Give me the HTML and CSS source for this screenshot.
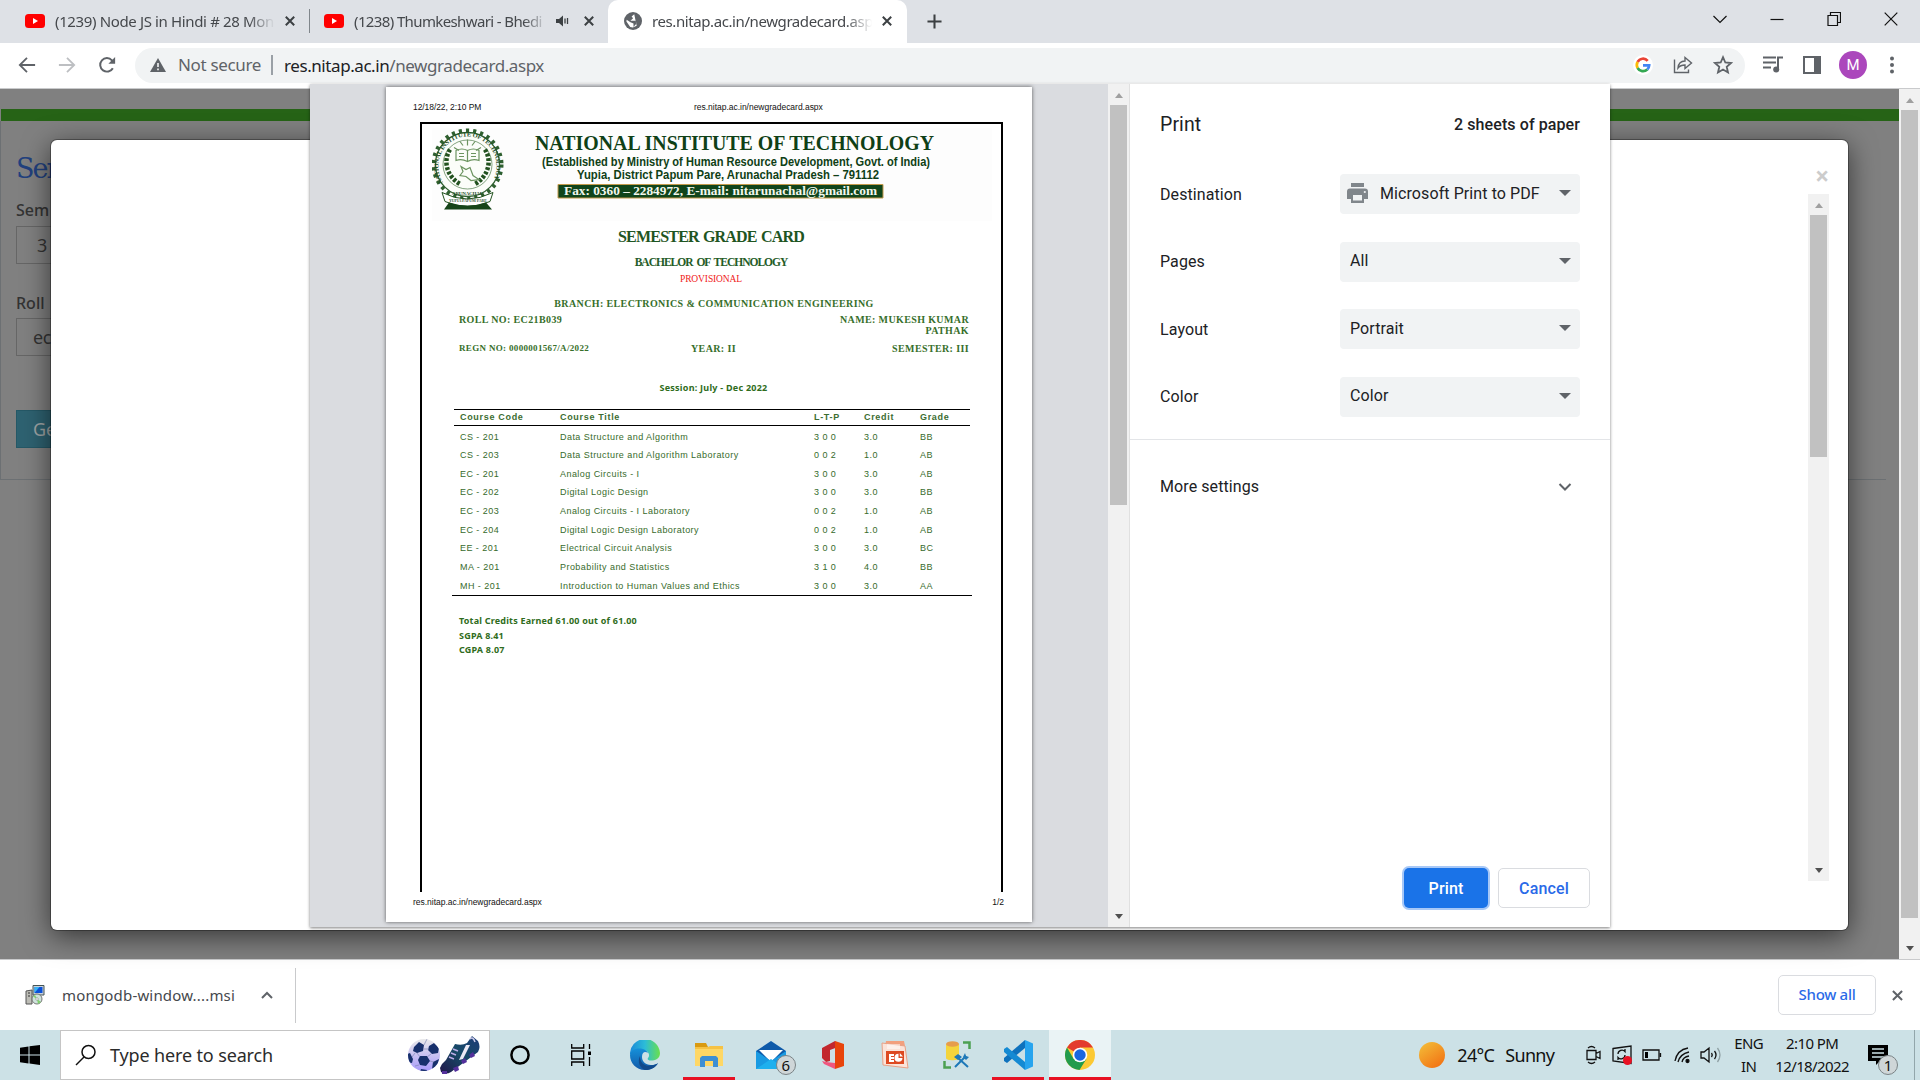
FILE: index.html
```html
<!DOCTYPE html>
<html lang="en">
<head>
<meta charset="utf-8">
<title>res.nitap.ac.in/newgradecard.aspx</title>
<link rel="stylesheet" href="styles.css">
</head>
<body>
<header class="tabstrip">
  <div class="tab tab-first">
    <svg class="yt" viewBox="0 0 20 14"><rect width="20" height="14" rx="3.5" fill="#f00"/><path d="M8 4l5 3-5 3z" fill="#fff"/></svg>
    <span class="tab-title">(1239) Node JS in Hindi # 28 Mon</span>
    <svg class="x" viewBox="0 0 10 10"><path d="M.8.8l8.400 8.400M9.200.8L.8 9.200"/></svg>
  </div>
  <div class="tab tab-second">
    <svg class="yt" viewBox="0 0 20 14"><rect width="20" height="14" rx="3.500" fill="#f00"/><path d="M8 4l5 3-5 3z" fill="#fff"/></svg>
    <span class="tab-title short">(1238) Thumkeshwari - Bhedi</span>
    <svg class="speaker" viewBox="0 0 14 12"><path d="M0 4h3l4-3.500v11L3 8H0z" fill="#3c4043"/><path d="M9 3.500v5M11.500 3v6" stroke="#3c4043" stroke-width="1.300"/></svg>
    <svg class="x" viewBox="0 0 10 10"><path d="M.8.8l8.400 8.400M9.200.8L.8 9.200"/></svg>
  </div>
  <div class="tab tab-active">
    <svg class="globe" viewBox="0 0 20 20"><circle cx="10" cy="10" r="9" fill="#5f6368"/><path d="M11.500 1.500L8 4.500l2 2-3.500 3.500h6.500l1.500 3.500-4 4.500v-4.500L6.500 12 1.500 8.500l-.3 2.500 5 7 3.500.8 5-2.300z" fill="#fff" transform="translate(2.500 2.200) scale(.76)"/></svg>
    <span class="tab-title">res.nitap.ac.in/newgradecard.aspx</span>
    <svg class="x" viewBox="0 0 10 10"><path d="M.8.8l8.400 8.400M9.200.8L.8 9.200"/></svg>
  </div>
  <svg class="newtab" viewBox="0 0 16 16"><path d="M8 .5v15M.5 8h15" stroke="#3c4043" stroke-width="2.200"/></svg>
  <div class="winctl">
    <svg viewBox="0 0 14 14"><path d="M.5 4l6.500 6.500L13.500 4"/></svg>
    <svg viewBox="0 0 14 14"><path d="M.5 7.500h13"/></svg>
    <svg viewBox="0 0 14 14"><path d="M1 3.500h9.500v10H1zM3.500 3.500v-3h10v10h-3"/></svg>
    <svg viewBox="0 0 14 14"><path d="M.7.700l12.600 12.600M13.300.7L.7 13.300"/></svg>
  </div>
</header>

<nav class="toolbar">
  <svg class="nav" viewBox="0 0 20 20"><path d="M19 10H3M10 2L2 10l8 8" fill="none" stroke="#5f6368" stroke-width="2"/></svg>
  <svg class="nav" viewBox="0 0 20 20"><path d="M1 10h16M10 2l8 8-8 8" fill="none" stroke="#bdbfc2" stroke-width="2"/></svg>
  <svg class="nav" viewBox="0 0 20 20"><path d="M16.500 13.500A7.500 7.500 0 1 1 15.500 4.800L17 6.500" fill="none" stroke="#5f6368" stroke-width="2.200"/><path d="M19 1v7.500h-7.500z" fill="#5f6368"/></svg>
  <div class="omnibox">
    <svg class="warn" viewBox="0 0 16 14"><path d="M8 0l8 14H0z" fill="#5f6368"/><path d="M8 5v4M8 10.500v1.700" stroke="#fff" stroke-width="1.500"/></svg>
    <span class="insecure">Not secure</span>
    <span class="url"><b>res.nitap.ac.in</b>/newgradecard.aspx</span>
    <span class="omni-icons">
      <svg width="20" height="20" viewBox="0 0 20 20"><circle cx="10" cy="10" r="10" fill="#fff"/><g fill="none" stroke-width="2.700"><path d="M14.700 5.800A6.200 6.200 0 0 0 4.600 7" stroke="#ea4335"/><path d="M4.600 7a6.200 6.200 0 0 0 0 6" stroke="#fbbc05"/><path d="M4.600 13a6.200 6.200 0 0 0 9.700 1.500" stroke="#34a853"/><path d="M14.300 14.500a6 6 0 0 0 1.900-4.200H10" stroke="#4285f4"/></g></svg>
      <svg width="20" height="20" viewBox="0 0 20 20" fill="none" stroke="#5f6368" stroke-width="1.400"><path d="M1.500 4.500v13h14v-3"/><path d="M5 13c.5-5 3-7 7-7V2.500L18.500 8 12 13.500V10c-3 0-5 .5-7 3z"/></svg>
      <svg width="20" height="20" viewBox="0 0 20 20"><path d="M10 2.200l2.300 5.300 5.700.5-4.300 3.800 1.300 5.700-5-3-5 3 1.300-5.700L2 8l5.700-.5z" fill="none" stroke="#5f6368" stroke-width="1.800"/></svg>
    </span>
  </div>
  <svg class="queue" viewBox="0 0 20 18"><path d="M0 1.500h13M0 6.500h13M0 11.500h8M15 14V1.500h5" fill="none" stroke="#5f6368" stroke-width="2"/><circle cx="13.200" cy="13.500" r="3" fill="#5f6368"/></svg>
  <svg class="side" viewBox="0 0 18 18"><path d="M1 1h16v16H1z" fill="#fff" stroke="#5f6368" stroke-width="2"/><path d="M11 1h6v16h-6z" fill="#5f6368"/></svg>
  <span class="avatar">M</span>
  <svg class="dots" viewBox="0 0 4 18" fill="#5f6368"><circle cx="2" cy="2.500" r="2"/><circle cx="2" cy="9" r="2"/><circle cx="2" cy="15.500" r="2"/></svg>
</nav>

<main class="page">
  <section class="site">
    <div class="green"></div>
    <div class="form">
      <h1>Sem</h1>
      <label>Sem</label>
      <div class="field sel">3</div>
      <label class="second">Roll</label>
      <div class="field">ec</div>
      <div class="go">Get</div>
    </div>
  </section>
  <div class="vscroll outer"><i class="up"></i><i class="thumb"></i><i class="down"></i></div>

  <section class="modal">
    <div class="modal-x">×</div>
    <div class="vscroll inner"><i class="up"></i><i class="thumb"></i><i class="down"></i></div>
  </section>

  <section class="print">
    <div class="preview">
      <article class="sheet">
        <div class="runhead"><span>12/18/22, 2:10 PM</span><span>res.nitap.ac.in/newgradecard.aspx</span></div>
        <div class="frame">
          <svg class="letterhead" width="560" height="93" viewBox="0 2.500 560 93">
            <defs><path id="ring" d="M11 57A29 30 0 1 1 60 57"/></defs>
            <circle cx="35.500" cy="39" r="34" fill="none" stroke="#2f6030" stroke-width="4" stroke-dasharray="3.200 4"/>
            <circle cx="35.500" cy="39" r="32" fill="#fbfdf9" stroke="#2f6030" stroke-width="1.300"/>
            <circle cx="35.500" cy="39" r="24.500" fill="none" stroke="#4f7c4a" stroke-width=".7"/>
            <g fill="#1c4c1f" font-family="Liberation Serif, serif" font-weight="bold" font-size="6.500"><text><textPath href="#ring" textLength="122">NATIONAL INSTITUTE OF TECHNOLOGY</textPath></text></g>
            <g fill="none" stroke="#22521f" stroke-width="4.500" stroke-dasharray="3 1.600"><path d="M18 24c-7 11-4 27 11 35M53 24c7 11 4 27-11 35"/></g>
            <path d="M24 35V25q6-3 11.500 0 6-3 11.500 0v10q-6-2-11.500 1-6-3-11.500-1zM35.500 25v11M27 28h5M27 31h5M39 28h5M39 31h5M22 22l5 3M49 22l-5 3M35.500 14v6M28 16l3 4M43 16l-3 4M29 41l5 3 4-2 3 8 6 4-8 1-5-4-6-1 3-4z" fill="none" stroke="#6c9460" stroke-width="1.200"/>
            <path d="M10 67q25 13 51 0l-3 9q-23 10-45 0z" fill="#fff" stroke="#22521f"/>
            <text x="20" y="69" textLength="31" font-size="5" font-weight="bold" font-family="Liberation Serif, serif" fill="#1c4c1f">ARUNACHAL</text>
            <text x="17" y="76" textLength="38" font-size="4" font-weight="bold" font-family="Liberation Serif, serif" fill="#39623a">YUPIA PAPUM PARE</text>
            <path d="M17 77q19 6 37 0l6 7H12z" fill="#164519"/>
            <g fill="#0f4016" font-weight="bold">
              <text x="103" y="24.500" font-family="Liberation Serif, serif" font-size="21" textLength="399" lengthAdjust="spacingAndGlyphs">NATIONAL INSTITUTE OF TECHNOLOGY</text>
              <g font-family="Liberation Sans, sans-serif" font-size="12">
                <text x="110" y="40" textLength="388" lengthAdjust="spacingAndGlyphs">(Established by Ministry of Human Resource Development, Govt. of India)</text>
                <text x="145" y="53" textLength="302" lengthAdjust="spacingAndGlyphs">Yupia, District Papum Pare, Arunachal Pradesh – 791112</text>
              </g>
            </g>
            <path d="M126 59h325v13.500H126z" fill="#10451b" stroke="#c39a4c"/>
            <text x="132" y="69.500" font-family="Liberation Serif, serif" font-weight="bold" font-size="11.500" textLength="313" lengthAdjust="spacingAndGlyphs" fill="#f3f8ee">Fax: 0360 – 2284972, E-mail: nitarunachal@gmail.com</text>
          </svg>
          <h2>SEMESTER GRADE CARD</h2>
          <h3>BACHELOR OF TECHNOLOGY</h3>
          <div class="prov">PROVISIONAL</div>
          <div class="info branch">BRANCH: ELECTRONICS &amp; COMMUNICATION ENGINEERING</div>
          <div class="info row2"><span>ROLL NO: EC21B039</span><span class="r">NAME: MUKESH KUMAR<br>PATHAK</span></div>
          <div class="info row3"><span class="regn">REGN NO: 0000001567/A/2022</span><span>YEAR: II</span><span class="r">SEMESTER: III</span></div>
          <div class="session">Session: July - Dec 2022</div>
          <div class="grades head"><span>Course Code</span><span>Course Title</span><span>L-T-P</span><span>Credit</span><span>Grade</span></div>
          <div class="body">
            <div class="grades"><span>CS - 201</span><span>Data Structure and Algorithm</span><span>3 0 0</span><span>3.0</span><span>BB</span></div>
            <div class="grades"><span>CS - 203</span><span>Data Structure and Algorithm Laboratory</span><span>0 0 2</span><span>1.0</span><span>AB</span></div>
            <div class="grades"><span>EC - 201</span><span>Analog Circuits - I</span><span>3 0 0</span><span>3.0</span><span>AB</span></div>
            <div class="grades"><span>EC - 202</span><span>Digital Logic Design</span><span>3 0 0</span><span>3.0</span><span>BB</span></div>
            <div class="grades"><span>EC - 203</span><span>Analog Circuits - I Laboratory</span><span>0 0 2</span><span>1.0</span><span>AB</span></div>
            <div class="grades"><span>EC - 204</span><span>Digital Logic Design Laboratory</span><span>0 0 2</span><span>1.0</span><span>AB</span></div>
            <div class="grades"><span>EE - 201</span><span>Electrical Circuit Analysis</span><span>3 0 0</span><span>3.0</span><span>BC</span></div>
            <div class="grades"><span>MA - 201</span><span>Probability and Statistics</span><span>3 1 0</span><span>4.0</span><span>BB</span></div>
            <div class="grades"><span>MH - 201</span><span>Introduction to Human Values and Ethics</span><span>3 0 0</span><span>3.0</span><span>AA</span></div>
          </div>
          <div class="totals">Total Credits Earned 61.00 out of 61.00<br>SGPA 8.41<br>CGPA 8.07</div>
        </div>
        <div class="runfoot"><span>res.nitap.ac.in/newgradecard.aspx</span><span>1/2</span></div>
      </article>
      <div class="vscroll mid"><i class="up"></i><i class="thumb"></i><i class="down"></i></div>
    </div>
    <aside class="settings">
      <div class="title"><span>Print</span><strong>2 sheets of paper</strong></div>
      <div class="opts">
        <div class="opt"><span>Destination</span><div class="pick dest"><svg width="22" height="20" viewBox="0 0 22 20"><path d="M4 0h13v4H4z" fill="#80868b"/><path d="M3 5.500h15a3 3 0 0 1 3 3V16h-4v4H4v-4H0V8.500a3 3 0 0 1 3-3z" fill="#80868b"/><path d="M6 12h9v5.500H6z" fill="#f1f3f4"/><circle cx="17.800" cy="9" r="1.100" fill="#f1f3f4"/></svg>Microsoft Print to PDF</div></div>
        <div class="opt"><span>Pages</span><div class="pick">All</div></div>
        <div class="opt"><span>Layout</span><div class="pick">Portrait</div></div>
        <div class="opt"><span>Color</span><div class="pick">Color</div></div>
      </div>
      <div class="more"><span>More settings</span><svg width="14" height="10" viewBox="0 0 14 10"><path d="M1.500 2L7 7.500 12.500 2" fill="none" stroke="#5f6368" stroke-width="2"/></svg></div>
      <div class="actions"><button class="primary">Print</button><button>Cancel</button></div>
    </aside>
  </section>
</main>

<section class="downloads">
  <svg class="msi" viewBox="0 0 20 20"><path d="M1 6l6-1v14H1z" fill="#bdbdb6" stroke="#555"/><path d="M3 8h2M3 11h2" stroke="#333"/><path d="M8 .5h11V10H8z" fill="#c8d0dc" stroke="#455"/><path d="M9.500 2h8v6h-8z" fill="#0a50d8"/><path d="M9.500 8l5-6h-5z" fill="#38b4f4"/><circle cx="12" cy="14" r="5" fill="#cfe3dc" stroke="#777"/><path d="M12 14l-4-2.500L10 10zM12 14l4 3-3 2z" fill="#7fcf6c"/><circle cx="12" cy="14" r="1.300" fill="#fff" stroke="#777" stroke-width=".5"/></svg>
  <span class="file">mongodb-window....msi</span>
  <svg class="chev" viewBox="0 0 12 8"><path d="M1 7l5-5 5 5" fill="none" stroke="#5f6368" stroke-width="2"/></svg>
  <i class="bar"></i>
  <button class="showall">Show all</button>
  <svg class="dx" viewBox="0 0 12 12"><path d="M1 1l10 10M11 1L1 11" stroke="#5f6368" stroke-width="2.200"/></svg>
</section>

<footer class="taskbar">
  <div class="start"><svg width="20" height="20" viewBox="0 0 20 20"><path d="M0 2.700l8.500-1.200V9.400H0zM9.500 1.300L20 0v9.400H9.500zM0 10.400h8.500v8L0 17.300zM9.500 10.400H20V20L9.500 18.600z"/></svg></div>
  <div class="search">
    <svg width="22" height="22" viewBox="0 0 22 22"><circle cx="13.500" cy="8" r="6.500" fill="none" stroke="#111" stroke-width="1.500"/><path d="M9 13l-8 8" stroke="#111" stroke-width="1.500"/></svg>
    <span>Type here to search</span>
    <svg class="sport" width="74" height="40" viewBox="0 0 74 40"><defs><linearGradient id="ball" x2="0" y2="1"><stop offset="0" stop-color="#e9e9ea"/><stop offset="1" stop-color="#a89afa"/></linearGradient><linearGradient id="boot" x1="1" x2="0" y2="1"><stop offset="0" stop-color="#1d3c78"/><stop offset=".5" stop-color="#174a66"/><stop offset="1" stop-color="#21164a"/></linearGradient><clipPath id="bc"><circle cx="17" cy="20" r="16"/></clipPath></defs><circle cx="17" cy="20" r="16" fill="url(#ball)"/><g clip-path="url(#bc)" fill="#17306c"><path d="M7 12l5-5 5 3-1 6-6 2-4-2zM0 19l3-1 3 6-1 4-5-1zM22 11l5-3 5 5-1 5-6 1-4-4zM13 21l7 0 3 5-4 5-6-1-2-5zM26 27l6-3-2 8-5 2zM14 34l6 1-1 3-6-1z"/><path d="M16 14l6 0M8 18l-3 4M23 26l4 1M24 19l-4 3M10 18l3 4M12 30l-4 1M17 10l3-6" stroke="#8088b4" fill="none" stroke-width=".7"/></g><path d="M33 33q2-5 6-8l9-16q7 2 12-1l5-7 6 5q3 6 0 11L44 37q-5 3-10 0z" fill="url(#boot)"/><path d="M52 25l7-15 4 0-7 14z" fill="#eceaf6"/><path d="M44 18l5 2M46 14l5 2M42 22l5 2" stroke="#bcaee8" stroke-width="1.500"/><path d="M35 36h5v3h-5zM46 33l5-2 1 4-4 2zM54 26l4-3 2 4-4 2zM62 20l4-3 2 4-4 2z" fill="#54309c"/><path d="M63 4q3-3 5 3" stroke="#c9c8e8" stroke-width="1.500" fill="none"/></svg>
  </div>
  <div class="apps">
    <div><svg width="22" height="22" viewBox="0 0 22 22"><circle cx="11" cy="11" r="8.600" fill="none" stroke="#000" stroke-width="2.500"/></svg></div>
    <div><svg width="20" height="22" viewBox="0 0 20 22" fill="none" stroke="#000" stroke-width="1.300"><path d="M.7 0v4h12V0M.7 7h12v8H.7zM.7 22v-4h12v4M18.500 0v5M18.500 13v9"/><path d="M17 7.500h3v3.500h-3z" fill="#000" stroke="none"/></svg></div>
    <div><svg width="30" height="30" viewBox="0 0 30 30"><defs><linearGradient id="e1" x2="1"><stop offset="0" stop-color="#1b8ad8"/><stop offset=".5" stop-color="#2cbcd8"/><stop offset="1" stop-color="#6ae04c"/></linearGradient><linearGradient id="e2" x2="0" y2="1"><stop offset="0" stop-color="#1590d9"/><stop offset="1" stop-color="#1259a8"/></linearGradient></defs><path d="M0 15A15 15 0 0 1 30 13c0 6-5 7.500-9 7.500-3 0-4-1.200-3-2.500 3-4-1-8-5-8-6 0-12 3-13 5z" fill="url(#e1)"/><path d="M0 15c1-5 5-7 11-6.500 4 .5 6 2.500 7 4.500-3-2-6-1-6 4 0 4 3 8 9 8 3 0 5-.8 7-1.800C25 28 20 30 15 30 6 30 0 23 0 15z" fill="url(#e2)"/><path d="M10 16c0 7 5 11 11 9.500 3-.3 5-1 7-2.300-3 4.500-7 6.800-13 6.800-5-2-8-8-5-14z" fill="#114a8b"/></svg></div>
    <div class="on"><svg width="28" height="24" viewBox="0 0 28 24"><path d="M0 0h11l2 4H0z" fill="#d99a12"/><path d="M0 4h28v19H0z" fill="#fed765"/><path d="M0 4h13l2-1h13v3H0z" fill="#f6c244"/><path d="M5 24v-9l2-2h14l2 2v9h-5v-6h-8v6z" fill="#3d8fd4"/></svg></div>
    <div class="mail"><svg width="30" height="28" viewBox="0 0 30 28"><path d="M0 10L15 0l15 10v18H0z" fill="#0e5aa9"/><path d="M3 9h24L15 21z" fill="#fff"/><path d="M0 10l15 10L30 10v18H0z" fill="#199ae2"/><path d="M0 28l15-10 15 10z" fill="#1fb0ee"/></svg><em>6</em></div>
    <div><svg width="24" height="28" viewBox="0 0 24 28"><path d="M1 7L14 0l3 6-8 3v11l-4 1-4-4z" fill="#c2272d"/><path d="M14 0l9 3v22l-9 3z" fill="#e8440b"/><path d="M1 20l4 1 9 1v6L3 23z" fill="#f0567e"/></svg></div>
    <div><svg width="28" height="28" viewBox="0 0 28 28"><path d="M5 0h18l1 5H4z" fill="#f2a07e"/><path d="M1 2l23 3 3 22-25-3z" fill="#fbe3d9" stroke="#e9a186"/><path d="M5 10h18v13H5z" fill="#dd4a22"/><path d="M8 13h5v2h-3v1h3v2h-3v1h3v2H8z" fill="#fff"/><path d="M17.500 12.800a4 4 0 1 0 4 4.200h-4z" fill="#fff"/><path d="M18.800 12v3.500H22z" fill="#fff"/><path d="M6 3h13v5H6z" fill="#fff" opacity=".5"/></svg></div>
    <div><svg width="28" height="28" viewBox="0 0 28 28"><path d="M3 3v14c0 3 13 3 13 0V3z" fill="#f4d43c"/><ellipse cx="9.500" cy="3" rx="6.500" ry="2.800" fill="#e69c4c"/><path d="M20 1.500h6.500V8M1.500 20v6.500H8" fill="none" stroke="#4ba052" stroke-width="2.500"/><path d="M14 16l11 10M23 15L12 26" stroke="#1d78b8" stroke-width="2"/><path d="M20 16l2-4 1 3 3 1-3 3zM11 16l4-3 4 3-4 3z" fill="#1d78b8"/></svg></div>
    <div class="on"><svg width="30" height="30" viewBox="0 0 30 30"><path d="M22 0v8L4 23l-3-2v-3z" fill="#0e72bd"/><path d="M22 30v-8L4 7 1 9v3z" fill="#148ad3"/><path d="M22 0l8 3.500v23L22 30z" fill="#27a4ee"/></svg></div>
    <div class="on active"><svg width="30" height="30" viewBox="0 0 30 30"><circle cx="15" cy="15" r="15" fill="#fcc934"/><path d="M15 15L2 7.500A15 15 0 0 1 28 7.500H15z" fill="#e33b2e"/><path d="M2 7.500A15 15 0 0 0 14.500 30L21.500 18.700 15 15 8.500 18.700z" fill="#229b4d"/><circle cx="15" cy="15" r="7.300" fill="#fff"/><circle cx="15" cy="15" r="5.700" fill="#1a66e0"/></svg></div>
  </div>
  <div class="tray">
    <i class="sun"></i><span class="temp">24°C</span><span>Sunny</span>
    <svg viewBox="0 0 16 20"><path d="M1 5.500h9v9H1zM10 8.500l4-2v7l-4-2M2 3q3.500-3 7 0M2 17q3.500 3 7 0"/></svg>
    <svg viewBox="0 0 20 20"><path d="M1 3.500L19 1v17.500L1 16z"/><path d="M6 9a4 4 0 0 1 7-2.500V4M13 10a4 4 0 0 1-7 2.500V15"/><circle cx="15.500" cy="15.500" r="4.500" fill="#e81123" stroke="none"/></svg>
    <svg viewBox="0 0 20 20"><path d="M1 5h16v10H1zM18.500 8v4"/><path d="M3 7h3v6H3z" fill="#000" stroke="none"/></svg>
    <svg viewBox="0 0 16 20"><path d="M1 16Q3 5 14 3M4 17q2-8 11-10M8 17q1-5 7-6"/><circle cx="13.500" cy="16" r="1.500" fill="#000"/></svg>
    <svg viewBox="0 0 21 20"><path d="M1 7h3l5-4v14l-5-4H1zM11.500 8q1.500 2 0 4M14.500 6q3 4 0 8"/><path d="M17.500 3q5 7 0 14" stroke="#8fa0a4"/></svg>
    <div class="two">ENG<br>IN</div>
    <div class="two">2:10 PM<br>12/18/2022</div>
    <div class="notif"><svg viewBox="0 0 20 20"><path d="M0 0h20v16h-8l-4 4v-4H0z" fill="#000" stroke="none"/><path d="M4 4h12M4 8h12M4 12h12" stroke="#cce1e6"/></svg><em>1</em></div>
  </div>
</footer>
</body>
</html>
```
FILE: styles.css
```css
*{box-sizing:border-box}
body{margin:0;width:1920px;height:1080px;overflow:hidden;display:flex;flex-direction:column;font-family:"Noto Sans",sans-serif;color:#202124;background:#fff}
svg{display:block;flex:none}
i,em{font-style:normal}

.tabstrip{height:43px;background:#dee1e6;display:flex;align-items:center;flex:none}
.tab{display:flex;align-items:center;height:43px;padding-bottom:1px;flex:none}
.tab-first{width:311px;padding-left:25px}
.tab-first::after{content:"";width:1px;height:24px;background:#80868b;margin-left:14px}
.tab-second{width:297px;padding-left:13px}
.tab-active{width:299px;background:#fff;border-radius:10px 10px 0 0;padding-left:15px}
.yt{width:20px;height:14px;margin-right:10px}
.globe{width:20px;height:20px;margin-right:9px}
.tab-title{width:220px;margin-right:10px;overflow:hidden;white-space:nowrap;font-size:15px;letter-spacing:-.36px;color:#45484c;-webkit-mask-image:linear-gradient(90deg,#000 88%,transparent);mask-image:linear-gradient(90deg,#000 88%,transparent)}
.tab-second .tab-title{width:193px;margin-right:9px;letter-spacing:-.62px}
.tab-active .tab-title{letter-spacing:-.41px}
.x{width:10px;height:10px;overflow:visible}
.x path{stroke:#3c4043;stroke-width:2;fill:none}
.speaker{width:14px;height:12px;margin-right:14px}
.newtab{width:15px;height:15px;margin-left:20px}
.winctl{display:flex;gap:43px;margin-left:auto;padding:0 22px 5px 0}
.winctl svg{width:14px;height:14px}
.winctl path{fill:none;stroke:#111;stroke-width:1.200}

.toolbar{height:46px;background:#fff;border-bottom:1px solid #c9cacc;display:flex;align-items:center;padding:0 21px 1px 18px;flex:none}
.nav{width:18px;height:18px;margin-right:22px}
.omnibox{width:1610px;height:35px;border-radius:18px;background:#f1f3f4;display:flex;align-items:center;padding-left:15px;margin-left:-3px;font-size:17px;color:#5f6368}
.warn{width:16px;height:14px;margin-right:12px}
.insecure{letter-spacing:-.34px;padding-right:10px;border-right:2px solid #9aa0a6;line-height:20px}
.url{letter-spacing:-.43px;padding-left:11px}
.url b{font-weight:400;color:#202124}
.omni-icons{display:flex;gap:20px;margin-left:auto;padding-right:12px}
.queue{width:20px;height:18px;margin-left:18px}
.side{width:18px;height:18px;margin-left:20px}
.avatar{width:28px;height:28px;border-radius:50%;background:#ab47bc;color:#fff;font:15px/28px Roboto,sans-serif;text-align:center;margin:0 23px 0 18px}
.dots{width:4px;height:18px}

.page{height:870px;position:relative;background:#808080;display:flex;flex:none}
.site{flex:1;padding:20px 0 0 1px}
.green{height:12px;background:#266316}
.form{height:359px;border:solid #6c7073;border-width:0 0 1px 1px;margin-left:-1px;padding:29px 0 0 15px;color:#333;font-size:17px;width:1886px}
h1{font:27px/38px "DejaVu Serif",serif;color:#22417e;margin:0 0 12px;height:38px;letter-spacing:-2px}
.form label{display:block;font-size:16px;font-weight:500;line-height:20px;height:26px}
.form .second{margin-top:29px;height:25px}
.field{width:400px;height:38px;border:1px solid #666;padding:5px 16px;font-size:18px;line-height:26px;letter-spacing:-.5px}
.field.sel{padding-left:20px}
.go{width:90px;height:38px;margin-top:54px;background:#2e6271;border:1px solid #255866;color:#9fa5a6;padding:5px 16px;font-size:18px;line-height:27px}

.vscroll{width:21px;background:#f1f1f1;display:flex;flex-direction:column;align-items:center;flex:none}
.vscroll .up,.vscroll .down{width:0;height:0;border:4.500px solid transparent}
.vscroll .up{border-bottom:5px solid #a0a0a0;border-top:0;margin:9px 0 7px}
.vscroll .down{border-top:5px solid #505050;border-bottom:0;margin:auto 0 8px}
.vscroll .thumb{width:17px;background:#c1c1c1}
.outer .thumb{height:808px}
.inner .thumb{height:242px}
.mid .thumb{height:400px}

.modal{position:absolute;left:51px;top:51px;width:1797px;height:790px;background:#fff;border-radius:6px;box-shadow:0 0 0 1px rgba(0,0,0,.3),0 6px 28px rgba(0,0,0,.6);display:flex;flex-direction:column;align-items:flex-end;padding:20px 19px 0 0}
.modal-x{font:bold 25px/30px "Noto Sans",sans-serif;color:#ccc;height:34px;width:14px}
.inner{height:687px}

.print{position:absolute;left:310px;top:-5px;width:1300px;height:843px;background:#fff;display:flex;box-shadow:0 1px 3px rgba(0,0,0,.5)}
.preview{width:820px;background:#dadce0;display:flex;padding-left:76px;border-right:1px solid #e0e0e0;justify-content:space-between}
.sheet{width:646px;height:835px;margin-top:3px;background:#fff;box-shadow:0 0 4px rgba(0,0,0,.6);padding:15px 28px 0 27px}
.runhead,.runfoot{font:8.500px/11px "Liberation Sans",sans-serif;color:#111;display:flex;letter-spacing:-.02px}
.runhead{height:20px}
.runhead span:first-child{width:281px;letter-spacing:-.07px}
.runfoot{justify-content:space-between;padding-top:5px}
.frame{width:583px;height:770px;margin-left:7px;border:2px solid #000;border-bottom:0;padding:4px 9px 0 10px;color:#24602a;text-align:center}
.letterhead{background:#fdfdfd}
h2{font:bold 16px/20px "Liberation Serif",serif;margin:6px 0 0 -2px;letter-spacing:-.8px;word-spacing:1px;color:#1f5522}
h3{font:bold 11.500px/14px "Liberation Serif",serif;margin:8px 0 0 -2px;letter-spacing:-1px;word-spacing:2px;color:#245c28}
.prov{font:9.500px/12px "Liberation Serif",serif;color:#f02020;margin:4px 0 0 -2px;letter-spacing:-.12px}
.info{font:bold 10px/11px "Liberation Serif",serif;letter-spacing:.38px;color:#376f2b;margin:0 23px 0 27px}
.info.branch{margin-top:13px;height:16px}
.row2{display:flex;justify-content:space-between;height:29px}
.row3{display:grid;grid-template-columns:232px 80px 1fr;text-align:left}
.r{text-align:right}
.info .regn{font-size:9px;letter-spacing:.33px}
.session,.totals{font:bold 9px/14.500px "Noto Sans",sans-serif;letter-spacing:.2px;color:#2f6c20}
.session{margin-top:27px;margin-left:3px;letter-spacing:.24px}
.grades{display:grid;grid-template-columns:100px 254px 50px 56px 1fr;padding-left:8px;font:9px/18.620px "Liberation Sans",sans-serif;letter-spacing:.45px;text-align:left;color:#376b2b}
.grades.head{font-weight:bold;line-height:15px;height:17px;border:solid #000;border-width:1px 0;margin:13px 22px 0;letter-spacing:.68px;color:#3c6d31;padding-left:6px}
.body{border-bottom:1px solid #000;margin:0 20px;padding:2px 0 0}
.totals{text-align:left;margin:18px 0 0 27px}

.settings{flex:1;display:flex;flex-direction:column;font:16px Roboto,sans-serif;letter-spacing:.09px;color:#202124}
.title{display:flex;justify-content:space-between;align-items:center;height:90px;padding:0 30px 9px;font-size:19.500px}
.title strong{font-size:16px;font-weight:500}
.opts{display:flex;flex-direction:column;gap:27.600px;height:266px;border-bottom:1px solid #e3e5e8}
.opt{display:flex;justify-content:space-between;align-items:center;padding:0 30px}
.pick{width:240px;height:40px;background:#f1f3f4;border-radius:4px;display:flex;align-items:center;padding:0 9px 2px 10px}
.pick::after{content:"";border:6px solid transparent;border-top-color:#5f6368;border-bottom:0;margin-left:auto}
.dest{padding-left:7px}
.dest svg{margin-right:11px}
.more{display:flex;justify-content:space-between;align-items:center;height:93px;padding:0 38px 0 30px}
.actions{display:flex;gap:10px;margin:auto 20px 19px auto}
button{width:92px;height:40px;border:1px solid #dadce0;border-radius:5px;background:#fff;color:#2a6ae8;font:500 16px Roboto,sans-serif;padding:0;letter-spacing:.15px}
.actions .primary{width:84px;background:#1a73e8;color:#fff;border:0;box-shadow:0 0 0 2px #a7c8f7}

.downloads{height:71px;border-top:1px solid #c9cacc;display:flex;align-items:center;padding:0 17px 0 25px;flex:none}
.msi{width:20px;height:20px}
.file{font-size:15px;letter-spacing:.18px;color:#45484c;margin-left:17px;width:199px}
.chev{width:12px;height:8px}
.bar{width:1px;height:55px;background:#c9cacc;margin-left:22px}
.downloads .showall{width:98px;margin-left:auto;font:500 15px "Noto Sans",sans-serif;letter-spacing:-.3px;padding-bottom:3px}
.dx{width:11px;height:11px;margin-left:16px}

.taskbar{height:50px;background:#cce1e6;display:flex;flex:none;color:#111}
.start{width:60px;display:flex;align-items:center;justify-content:center}
.search{width:430px;height:50px;background:#fff;border:1px solid #c5c5c5;display:flex;align-items:center;padding:0 8px 0 14px;font-size:18px;letter-spacing:-.14px;color:#2b2b2b}
.search span{margin-left:13px}
.sport{margin-left:auto}
.apps{display:grid;grid-template-columns:60px 61px 67px repeat(7,61.900px)}
.apps>div{display:flex;align-items:center;justify-content:center;position:relative}
.on::after{content:"";position:absolute;left:5px;right:5px;bottom:0;height:3px;background:#e81123}
.on.active{background:#eaf3f5}
.active::after{left:0;right:0}
em{position:absolute;width:20px;height:20px;border-radius:50%;background:#cfd6d8;border:1px solid #7b8386;font:15px/18px "Noto Sans",sans-serif;text-align:center;right:6px;bottom:5px;letter-spacing:0}
.tray{margin-left:auto;display:flex;align-items:center;font-size:18px;letter-spacing:-.68px;border-right:1px solid #92a6ab;margin-right:5px}
.sun{width:26px;height:26px;border-radius:50%;background:linear-gradient(145deg,#f3c13a,#f26a10)}
.temp{margin:0 11px 0 12px}
.tray svg{height:20px;fill:none;stroke:#111;stroke-width:1.300}
.tray svg:nth-of-type(1){width:16px;margin-left:32px}
.tray svg:nth-of-type(2){width:20px;margin-left:10px}
.tray svg:nth-of-type(3){width:20px;margin-left:10px}
.tray svg:nth-of-type(4){width:16px;margin-left:12px}
.tray svg:nth-of-type(5){width:21px;margin-left:10px}
.two{font-size:15px;line-height:23px;text-align:center;letter-spacing:-.6px;margin-left:13px;padding-bottom:1px}
.two+.two{margin-left:12px}
.notif{position:relative;margin:0 26px 0 19px}
.tray .notif svg{width:20px;margin:0}
.notif em{right:-10px;bottom:-10px}
```
